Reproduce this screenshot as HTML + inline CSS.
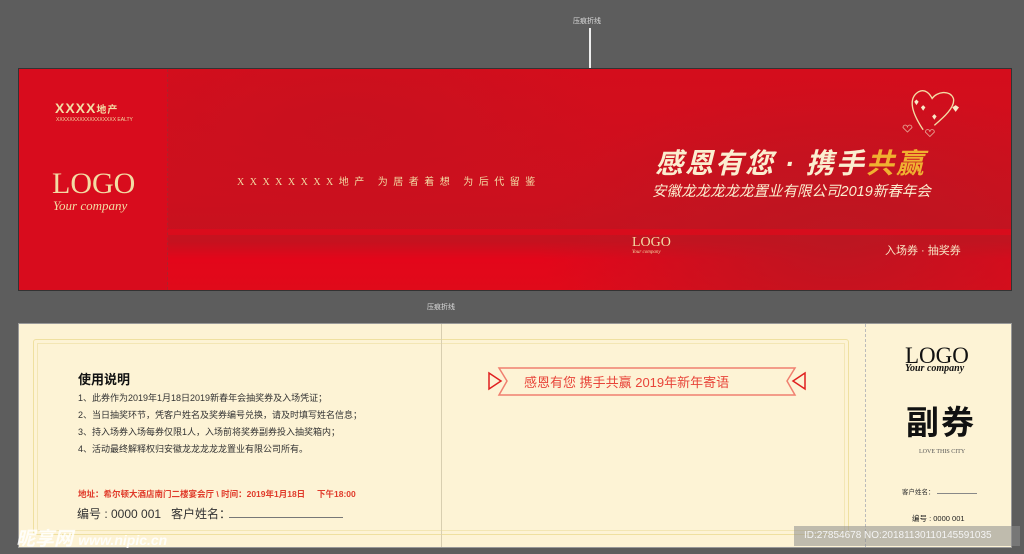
<!DOCTYPE html>
<html><head><meta charset="utf-8"><style>
*{margin:0;padding:0;box-sizing:border-box}
body{width:1024px;height:554px;background:#5d5d5d;position:relative;overflow:hidden;font-family:"Liberation Sans","Noto Sans CJK SC",sans-serif}
.abs{position:absolute}
.lbl{color:#ddd;font-size:7px;white-space:nowrap}
.top{left:18px;top:68px;width:994px;height:223px;border:1px solid #333;overflow:hidden;
background:radial-gradient(ellipse 260px 120px at 330px 60px,#c8111e 0%,rgba(200,17,30,0) 100%),
radial-gradient(ellipse 300px 160px at 820px 170px,#bc1621 0%,rgba(188,22,33,0) 100%),
linear-gradient(180deg,#d40d1c 0%,#cc101e 60%,#c5121f 78%,#e3061a 86%,#e00a1a 100%)}
.stub{left:0;top:0;width:149px;height:100%;background:#d80c1d;border-right:1px dashed #b0202a}
.gold{color:#f3dca4}
.bot{left:18px;top:323px;width:994px;height:225px;background:#fdf3d5;border:1px solid #999}
.serif{font-family:"Liberation Serif",serif}
</style></head><body>
<div class="abs lbl" style="left:573px;top:16px">压痕折线</div>
<div class="abs" style="left:589px;top:28px;width:2px;height:40px;background:#eee"></div>
<div class="abs lbl" style="left:427px;top:302px">压痕折线</div>

<div class="abs top">
  <div class="abs stub"></div>
  <div class="abs" style="left:149px;top:160px;width:845px;height:6px;background:rgba(230,8,26,.6)"></div>
  <div class="abs gold" style="left:36px;top:31px;font-size:14px;font-weight:bold;letter-spacing:1px;line-height:16px">XXXX<span style="font-size:10px">地产</span></div>
  <div class="abs gold" style="left:37px;top:48px;font-size:5px;white-space:nowrap">XXXXXXXXXXXXXXXXXX EALTY</div>
  <div class="abs gold serif" style="left:33px;top:99px;font-size:30px;line-height:31px">LOGO</div>
  <div class="abs gold serif" style="left:34px;top:129px;font-size:13px;font-style:italic">Your company</div>
  <div class="abs gold serif" style="left:218px;top:104px;font-size:10px;letter-spacing:5.5px;white-space:nowrap">XXXXXXXX地产 为居者着想 为后代留鉴</div>
  <div class="abs" style="left:636px;top:73px;font-size:28px;font-weight:bold;font-style:italic;color:#fbeed0;white-space:nowrap;letter-spacing:2px">感恩有您 · 携手<span style="color:#f0b030">共赢</span></div>
  <div class="abs" style="left:633px;top:111px;font-size:14.5px;font-style:italic;color:#fbeed0;white-space:nowrap">安徽龙龙龙龙龙置业有限公司2019新春年会</div>
  <div class="abs gold serif" style="left:613px;top:167px;font-size:14px;line-height:14px">LOGO</div>
  <div class="abs gold serif" style="left:613px;top:181px;font-size:5px;font-style:italic">Your company</div>
  <div class="abs" style="left:866px;top:173px;font-size:11px;color:#f8e6c6;white-space:nowrap">入场券 · 抽奖券</div>
  <svg class="abs" style="left:872px;top:16px" width="80" height="56" viewBox="0 0 70 50">
    <path d="M28 40 C18 25 14 12 24 6 C30 3 34 8 36 12 C40 6 52 4 55 12 C57 20 45 30 38 36" fill="none" stroke="#f3dca4" stroke-width="1.2"/>
    <path d="M54 20 l3-2 l3 2 l-3 4z M26 20 l2-2 l2 2 l-2 3z M36 28 l2-2 l2 2 l-2 3z M20 15 l2-2 l2 2 l-2 3z" fill="#f8eac8"/>
    <path d="M10 38 c0-3 4-3 4 0 c0-3 4-3 4 0 l-4 4z M30 42 c0-3 4-3 4 0 c0-3 4-3 4 0 l-4 4z" fill="none" stroke="#e6a090" stroke-width=".8"/>
  </svg>
</div>

<div class="abs bot">
  <div class="abs" style="left:14px;top:15px;width:816px;height:196px;border:1px solid #efe0a0;border-radius:3px"></div>
  <div class="abs" style="left:18px;top:19px;width:808px;height:188px;border:1px solid #f3e6b4"></div>
  <div class="abs" style="left:422px;top:0;width:1px;height:100%;background:#d8ceb0"></div>
  <div class="abs" style="left:846px;top:0;width:0;height:100%;border-left:1px dashed #bbb"></div>
  <div class="abs" style="left:59px;top:45px;font-size:13px;font-weight:bold;color:#111">使用说明</div>
  <div class="abs" style="left:59px;top:66px;font-size:9px;line-height:17px;color:#333;white-space:nowrap">1、此券作为2019年1月18日2019新春年会抽奖券及入场凭证；<br>2、当日抽奖环节，凭客户姓名及奖券编号兑换，请及时填写姓名信息；<br>3、持入场券入场每券仅限1人，入场前将奖券副券投入抽奖箱内；<br>4、活动最终解释权归安徽龙龙龙龙龙置业有限公司所有。</div>
  <div class="abs" style="left:59px;top:164px;font-size:8.5px;font-weight:bold;color:#e03a2a;white-space:nowrap">地址：希尔顿大酒店南门二楼宴会厅 \ 时间：2019年1月18日 &nbsp;&nbsp;&nbsp;&nbsp;下午18:00</div>
  <div class="abs" style="left:58px;top:181px;font-size:12px;color:#333;white-space:nowrap">编号 : 0000 001 &nbsp; 客户姓名：</div>
  <div class="abs" style="left:210px;top:193px;width:114px;height:1px;background:#777"></div>
  <svg class="abs" style="left:468px;top:43px" width="320" height="30" viewBox="0 0 320 30">
    <path d="M12 1 H308 L300 14 L308 28 H12 L20 14 Z" fill="none" stroke="#f08070" stroke-width="1.5"/>
    <path d="M2 6 L14 14 L2 22 Z M318 6 L306 14 L318 22 Z" fill="none" stroke="#e02020" stroke-width="1.5"/>
  </svg>
  <div class="abs" style="left:505px;top:48px;font-size:13px;color:#e8453a;white-space:nowrap">感恩有您 携手共赢 2019年新年寄语</div>
  <div class="abs serif" style="left:886px;top:21px;font-size:23px;line-height:22px;color:#111">LOGO</div>
  <div class="abs serif" style="left:886px;top:39px;font-size:10px;font-style:italic;font-weight:bold;color:#111">Your company</div>
  <div class="abs" style="left:887px;top:72px;font-size:33px;font-weight:bold;color:#111;letter-spacing:2px">副券</div>
  <div class="abs serif" style="left:900px;top:125px;font-size:6px;color:#555">LOVE THIS CITY</div>
  <div class="abs" style="left:883px;top:162px;font-size:6.5px;color:#333">客户姓名：</div>
  <div class="abs" style="left:918px;top:169px;width:40px;height:1px;background:#888"></div>
  <div class="abs" style="left:893px;top:189px;font-size:7.5px;color:#222">编号 : 0000 001</div>
  <div class="abs" style="left:775px;top:202px;width:226px;height:20px;background:rgba(140,140,140,.55);color:#f4f4f4;font-size:10px;line-height:20px;padding-left:10px;white-space:nowrap">ID:27854678 NO:20181130110145591035</div>
</div>
<div class="abs" style="left:16px;top:524px;font-size:19px;font-weight:bold;font-style:italic;color:rgba(255,255,255,.85);white-space:nowrap">昵享网 <span style="font-size:14px">www.nipic.cn</span></div>
</body></html>
